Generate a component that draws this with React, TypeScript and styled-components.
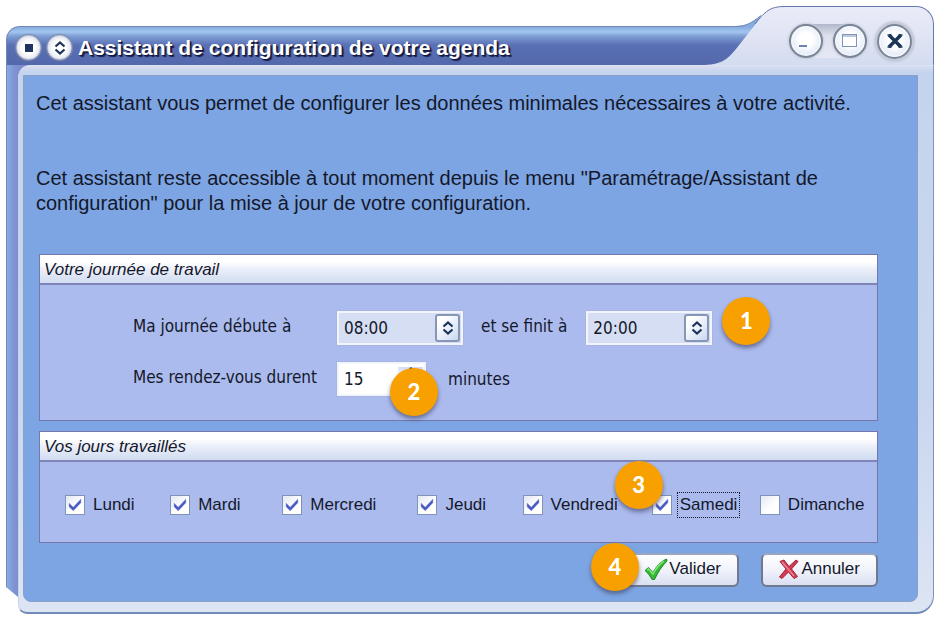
import React, { useState } from "react";
import styled, { createGlobalStyle, css } from "styled-components";

const GlobalStyle = createGlobalStyle`
  * { box-sizing: border-box; }
  body {
    margin: 0;
    background: #fff;
    color: #14182a;
    font: 17px/24px "Liberation Sans", Arial, sans-serif;
  }
  button, input { font: inherit; color: inherit; margin: 0; }
`;

const Page = styled.main`
  padding: 6px 12px 17px 6px;
`;

const Header = styled.header`
  display: flex;
  align-items: flex-end;
`;

const TitleBar = styled.div`
  flex: 1;
  min-width: 0;
  height: 39px;
  display: flex;
  align-items: center;
  gap: 6px;
  padding: 3px 0 0 9px;
  border: 1px solid #7488b8;
  border-width: 1px 0 0 1px;
  border-radius: 14px 0 0 0;
  background: linear-gradient(#86abe0 0, #a3c6ee 5px, #7f9fd6 9px, #5a70b4 18px, #5468ac 38px);
`;

const Title = styled.h1`
  margin: 0;
  white-space: nowrap;
  font-size: 21px;
  line-height: 24px;
  font-weight: bold;
  color: #fff;
  text-shadow: 1px 1px 1px #10163c, 2px 2px 1px #1b2350;
`;

const OrbButton = styled.button<{ $size: number }>`
  flex: none;
  width: ${(p) => p.$size}px;
  height: ${(p) => p.$size}px;
  display: grid;
  place-items: center;
  padding: 0;
  border-radius: 50%;
`;

const SmallOrb = styled(OrbButton)`
  border: 1px solid #c3c8d6;
  background: radial-gradient(circle, #fff 40%, #dfe3ee 75%);
  box-shadow: 0 0 1px 1px #7e89ab;
`;

const LargeOrb = styled(OrbButton)<{ $ring?: boolean }>`
  border: 2px solid #7b8595;
  background: radial-gradient(circle at 50% 45%, #fff 30%, #dbe6f6 80%);
  box-shadow: inset 0 0 2px 1px #fff, 0 0 2px ${(p) => (p.$ring ? "3px #c3c9d9" : "1px #c3cbdc")};
`;

const Slope = styled.svg`
  flex: none;
  display: block;
`;

const Tab = styled.div`
  flex: none;
  height: 59px;
  display: flex;
  align-items: center;
  padding: 0 21px 0 5px;
  border: 1px solid #6679ab;
  border-width: 1px 1px 0 0;
  border-radius: 0 18px 0 0;
  background: linear-gradient(#e9ebf8, #e2e5f4 45%, #d3dcf0);
`;

const SizeButtons = styled.div`
  display: flex;
  gap: 10px;
  margin: 10px 10px 0 0;
  border-radius: 17px;
  background: linear-gradient(#b1b7ca, #dfe2ee 35%, #e6e9f5);
`;

const CloseSlot = styled.div`
  margin-top: 10px;
`;

const Body = styled.div`
  display: flex;
`;

const Rail = styled.div`
  flex: none;
  width: 24px;
  margin: 0 -12px 17px 0;
  border-left: 1px solid #7488b8;
  background: linear-gradient(90deg, #86abe4, #8098d4 6px, #7a8ccc 12px);
  clip-path: polygon(0 0, 100% 0, 100% 100%, 12px 100%, 0 calc(100% - 10px));
`;

const Frame = styled.div`
  position: relative;
  flex: 1;
  min-width: 0;
  padding: 9px 15px 10px 4px;
  border: 1px solid #6f8abb;
  border-top-color: #dde2f2;
  border-left-color: #c8d2ea;
  border-right-color: #7d92be;
  border-width: 1px 1px 2px 1px;
  border-radius: 12px 0 18px 9px;
  background: linear-gradient(#d9deef 0, #c5d4ee 6px, #c9d6ef 60%, #dde5f4 100%);
`;

const Content = styled.form`
  padding: 15px 39px 14px 15px;
  border: 1px solid #8aa0c8;
  border-radius: 0 0 8px 8px;
  background: #7da5e3;
`;

const Intro = styled.div`
  margin: 0 0 38px -3px;
  font-size: 20px;
  line-height: 25px;
  p { margin: 0; }
  p + p { margin-top: 50px; }
`;

const Panel = styled.section`
  margin-bottom: 10px;
  border: 1px solid #7377ab;
  background: #abbbee;
`;

const PanelTitle = styled.h2`
  margin: 0;
  height: 30px;
  padding: 0 4px;
  border-bottom: 2px solid #8084b8;
  background: linear-gradient(#fff 25%, #eceffa 50%, #cfdcf0);
  font-size: 17px;
  line-height: 29px;
  font-weight: normal;
  font-style: italic;
`;

const Schedule = styled.div`
  display: grid;
  gap: 17px;
  padding: 26px 93px 24px;
`;

const FieldRow = styled.div`
  display: flex;
  align-items: center;
`;

const FieldLabel = styled.label<{ $width?: number }>`
  flex: none;
  width: ${(p) => (p.$width ? `${p.$width}px` : "auto")};
  white-space: nowrap;
  font: 17px/24px "DejaVu Sans Condensed", "Open Sans", sans-serif;
  padding-bottom: 4px;
`;

const Between = styled(FieldLabel)`
  margin: 0 19px 0 18px;
`;

const Unit = styled(FieldLabel)`
  margin-left: 22px;
  padding-bottom: 0;
`;

const Spin = styled.div<{ $white?: boolean }>`
  position: relative;
  flex: none;
  display: flex;
  width: ${(p) => (p.$white ? 89 : 126)}px;
  height: 34px;
  padding: 1px;
  border: 2px solid #f3f5fc;
  background: ${(p) => (p.$white ? "#fff" : "#d5def3")};
  box-shadow: 0 0 1px #8f98b5;
`;

const SpinInput = styled.input`
  flex: 1;
  min-width: 0;
  padding: 0 0 0 4px;
  border: 0;
  outline: 0;
  background: transparent;
  font: 17px/24px "DejaVu Sans Condensed", "Open Sans", sans-serif;
`;

const SpinButton = styled.button`
  flex: none;
  width: 25px;
  display: grid;
  place-items: center;
  padding: 0;
  border: 2px solid #8796b5;
  border-radius: 3px;
  background: linear-gradient(135deg, #fff 20%, #c9d8f0);
`;

const FlatSpinButton = styled(SpinButton)`
  place-items: start center;
  border-color: transparent;
  background: linear-gradient(#d3ddf3, #fff 40%);
`;

const Badge = styled.span<{ $x?: number; $y?: number }>`
  flex: none;
  width: 48px;
  height: 48px;
  border-radius: 50%;
  background: #f7a000;
  box-shadow: 0 3px 4px rgba(60, 60, 90, 0.6);
  color: #fff;
  font: 900 22px/47px Lato, "Open Sans", sans-serif;
  text-align: center;
  ${(p) =>
    p.$x !== undefined &&
    css`
      position: absolute;
      z-index: 1;
      left: ${p.$x}px;
      top: ${p.$y}px;
    `}
`;

const InlineBadge = styled(Badge)`
  margin: -14px 0 0 10px;
`;

const Days = styled.div`
  display: grid;
  grid-template-columns: 105fr 112fr 135fr 105fr 129fr 108fr 108fr;
  padding: 29px 9px 23px 25px;
`;

const Day = styled.label`
  position: relative;
  display: flex;
  align-items: center;
  gap: 5px;
  white-space: nowrap;
`;

const BoxWrap = styled.span`
  display: grid;
  flex: none;
  > * { grid-area: 1 / 1; place-self: center; }
  svg { pointer-events: none; }
`;

const Box = styled.input`
  appearance: none;
  width: 20px;
  height: 20px;
  border: 1px solid #7f93b8;
  outline: 0;
  background: linear-gradient(135deg, #e4e8f4, #fff 60%);
`;

const DayName = styled.span<{ $focused?: boolean }>`
  padding: 0 2px;
  margin: 1px 0;
  line-height: 24px;
  border: 1px dotted ${(p) => (p.$focused ? "#14182a" : "transparent")};
`;

const Actions = styled.div`
  display: flex;
  justify-content: flex-end;
  gap: 22px;
`;

const ActionButton = styled.button`
  position: relative;
  width: 117px;
  height: 34px;
  display: flex;
  align-items: center;
  justify-content: flex-end;
  gap: 1px;
  padding: 0 16px 2px 0;
  border: 2px solid #707990;
  border-top-color: #9aa6bf;
  border-radius: 6px;
  background: linear-gradient(#fff, #f1f3fb 50%, #dadff2);
`;

function Arrows() {
  return (
    <svg width="14" height="14" viewBox="0 0 14 14" fill="none" stroke="#1b3358" strokeWidth="2.2" aria-hidden="true">
      <path d="M2.500 5.500 7 1.500l4.500 4M2.500 8.500 7 12.500l4.500-4" />
    </svg>
  );
}

function TimeSpin({ id, initial }: { id: string; initial: string }) {
  const [value, setValue] = useState(initial);
  return (
    <Spin>
      <SpinInput id={id} value={value} onChange={(e) => setValue(e.target.value)} />
      <SpinButton type="button" aria-label="Modifier l'heure">
        <Arrows />
      </SpinButton>
    </Spin>
  );
}

const DAYS = ["Lundi", "Mardi", "Mercredi", "Jeudi", "Vendredi", "Samedi", "Dimanche"];

export default function App() {
  const [worked, setWorked] = useState<string[]>(DAYS.slice(0, 6));
  const [duration, setDuration] = useState("15");
  const toggle = (day: string) =>
    setWorked((list) => (list.includes(day) ? list.filter((d) => d !== day) : [...list, day]));

  return (
    <Page>
      <GlobalStyle />
      <Header>
        <TitleBar>
          <SmallOrb $size={25} type="button" aria-label="Menu">
            <svg width="8" height="8" aria-hidden="true"><rect width="8" height="8" fill="#1f3560" /></svg>
          </SmallOrb>
          <SmallOrb $size={25} type="button" aria-label="Enrouler"><Arrows /></SmallOrb>
          <Title>Assistant de configuration de votre agenda</Title>
        </TitleBar>
        <Slope width="83" height="59" viewBox="0 0 83 59" aria-hidden="true">
          <defs>
            <linearGradient id="bar" gradientUnits="userSpaceOnUse" x1="0" y1="21" x2="0" y2="59">
              <stop offset="0" stopColor="#86abe0" />
              <stop offset="0.132" stopColor="#a3c6ee" />
              <stop offset="0.237" stopColor="#7f9fd6" />
              <stop offset="0.474" stopColor="#5a70b4" />
              <stop offset="1" stopColor="#5468ac" />
            </linearGradient>
            <linearGradient id="tab" gradientUnits="userSpaceOnUse" x1="0" y1="0" x2="0" y2="59">
              <stop offset="0" stopColor="#e9ebf8" />
              <stop offset="0.450" stopColor="#e2e5f4" />
              <stop offset="1" stopColor="#d3dcf0" />
            </linearGradient>
          </defs>
          <path d="M0 20h34c12 0 17-4 26-10V59H0z" fill="url(#bar)" />
          <path d="M0 20.500h34c12 0 17-4 26-11" fill="none" stroke="#7488b8" />
          <path d="M0 59c20 0 26-5 35-16L57 15C65 5 70 0 83 0V59z" fill="url(#tab)" />
          <path d="M54 18l3-4C65 5 70 .5 83 .5" fill="none" stroke="#6679ab" />
        </Slope>
        <Tab>
          <SizeButtons>
            <LargeOrb $size={34} type="button" aria-label="Réduire">
              <svg width="18" height="18" aria-hidden="true"><path d="M2 14h8" stroke="#6e84ae" strokeWidth="2" /></svg>
            </LargeOrb>
            <LargeOrb $size={34} type="button" aria-label="Agrandir">
              <svg width="18" height="16" fill="none" stroke="#7f93b8" aria-hidden="true">
                <rect x="1.500" y="1.500" width="14" height="12" />
                <path d="M1.500 3h14" />
              </svg>
            </LargeOrb>
          </SizeButtons>
          <CloseSlot>
            <LargeOrb $size={35} $ring type="button" aria-label="Fermer">
              <svg width="18" height="18" stroke="#1c3658" strokeWidth="3.500" aria-hidden="true">
                <path d="M3 3l12 12M15 3L3 15" />
                <path d="M1.500 3h4M12.500 3h4M1.500 15h4M12.500 15h4" strokeWidth="1.500" />
              </svg>
            </LargeOrb>
          </CloseSlot>
        </Tab>
      </Header>
      <Body>
        <Rail />
        <Frame>
          <Content onSubmit={(e) => e.preventDefault()}>
            <Intro>
              <p>Cet assistant vous permet de configurer les données minimales nécessaires à votre activité.</p>
              <p>
                Cet assistant reste accessible à tout moment depuis le menu "Paramétrage/Assistant de
                configuration" pour la mise à jour de votre configuration.
              </p>
            </Intro>
            <Panel>
              <PanelTitle>Votre journée de travail</PanelTitle>
              <Schedule>
                <FieldRow>
                  <FieldLabel $width={204} htmlFor="start">Ma journée débute à</FieldLabel>
                  <TimeSpin id="start" initial="08:00" />
                  <Between htmlFor="end">et se finit à</Between>
                  <TimeSpin id="end" initial="20:00" />
                  <InlineBadge>1</InlineBadge>
                </FieldRow>
                <FieldRow>
                  <FieldLabel $width={204} htmlFor="duration">Mes rendez-vous durent</FieldLabel>
                  <Spin $white>
                    <SpinInput id="duration" value={duration} onChange={(e) => setDuration(e.target.value)} />
                    <FlatSpinButton type="button" aria-label="Modifier la durée"><Arrows /></FlatSpinButton>
                    <Badge $x={51} $y={4}>2</Badge>
                  </Spin>
                  <Unit htmlFor="duration">minutes</Unit>
                </FieldRow>
              </Schedule>
            </Panel>
            <Panel>
              <PanelTitle>Vos jours travaillés</PanelTitle>
              <Days>
                {DAYS.map((day) => (
                  <Day key={day}>
                    <BoxWrap>
                      <Box type="checkbox" checked={worked.includes(day)} onChange={() => toggle(day)} />
                      {worked.includes(day) && (
                        <svg width="14" height="14" viewBox="0 0 12 12" aria-hidden="true">
                          <path d="M1 4.500l3.500 3.500L11 1v3L4.500 11 1 7.500z" fill="#4a5cc4" stroke="#4a5cc4" strokeWidth=".3" />
                        </svg>
                      )}
                    </BoxWrap>
                    <DayName $focused={day === "Samedi"}>{day}</DayName>
                    {day === "Samedi" && <Badge $x={-37} $y={-30}>3</Badge>}
                  </Day>
                ))}
              </Days>
            </Panel>
            <Actions>
              <ActionButton type="submit">
                <svg width="24" height="23" viewBox="0 0 24 23" aria-hidden="true">
                  <path d="M1 12.500L4.500 9.500 9 14.500C12 9 16 4 22.500 1L23 3C18 8 14 14 10.500 21.500H8C6 18 4 15 1 12.500z" fill="#35b935" stroke="#1d8a26" />
                  <path d="M3 12l1.500-1L9 16C12 10 16 6 20 3" fill="none" stroke="#8be77f" strokeWidth="1.500" />
                </svg>
                Valider
                <Badge $x={-33} $y={-12}>4</Badge>
              </ActionButton>
              <ActionButton type="button">
                <svg width="22" height="21" viewBox="0 0 22 21" aria-hidden="true">
                  <path d="M2 2.500l4-1.500 5 6.500L18 1l2 1.500-6.500 7.500 6 7.500-3.500 2L10.500 13 4 19.500 1.500 18 8 10z" fill="#d43a52" stroke="#a3213c" />
                  <path d="M4 3l6.500 7.500L16 17" fill="none" stroke="#ee8492" strokeWidth="1.500" />
                </svg>
                Annuler
              </ActionButton>
            </Actions>
          </Content>
        </Frame>
      </Body>
    </Page>
  );
}
